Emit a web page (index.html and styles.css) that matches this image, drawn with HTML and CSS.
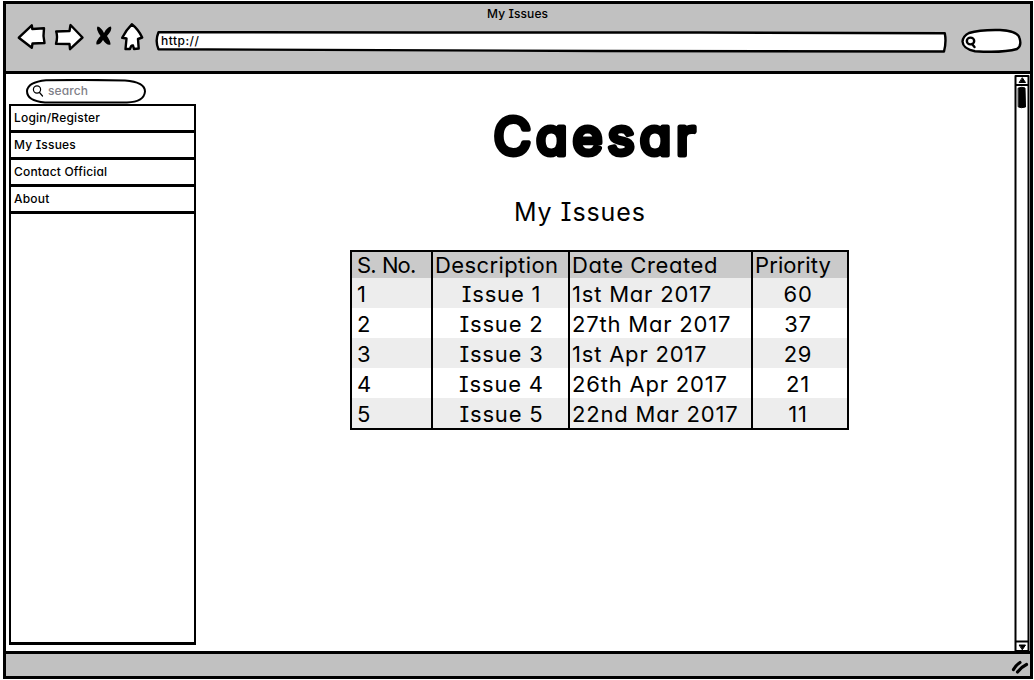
FILE: index.html
```html
<!DOCTYPE html>
<html lang="en">
<head>
<meta charset="utf-8">
<title>My Issues</title>
<link rel="stylesheet" href="styles.css">
</head>
<body>
<div class="window">
  <header class="chrome">
    <div class="window-title">My Issues</div>
    <div class="toolbar">
      <svg class="nav-icons" width="132" height="32" viewBox="15 21 132 32">
        <path d="M18.800 37.700L31.800 25.300L32.300 29L44 28.300Q42.800 36 44.500 43L32.500 43.500L31.800 47.800Z"/>
        <path d="M82.500 37.500L70.500 25L69.500 31L56.200 31.500Q58 37 56 43.800L69.500 44L70 49.200Z"/>
        <path class="solid" d="M97.500 26.500Q101 27 104 33Q107 27 111 26.500Q112.500 30 107 36Q110.500 41 110.500 44.500Q107 46 103 40Q100 45 96.500 44.500Q95.500 41 100.500 36Q95.500 29 97.500 26.500Z"/>
        <path d="M131.800 24.300Q126 30 122.200 37.800L126.500 38.500L125.500 49L130 49Q131 45 133 45.500L134 49L138.700 48.500L138 39L142.200 37.500Q138 29 131.800 24.300Z"/>
      </svg>
      <div class="address">
        <svg class="address-shape" width="792" height="23" viewBox="155 30 792 23"><path d="M158.500 32.200L420 32.500L700 32.500L944.800 33.300Q946.500 42 944 51.500L600 51L158.500 49.200Q154.800 41 158.500 32.200Z"/></svg>
        <span class="address-text">http://</span>
      </div>
      <svg class="web-search" width="62" height="26" viewBox="960 28 62 26">
        <path d="M969 33Q980 29.500 1000 30Q1018 31 1019.500 38Q1022 46 1017 49Q1003 53 975 51.200Q963 49 962.500 41.500Q963 36 969 33Z"/>
        <ellipse cx="970.500" cy="41" rx="3.700" ry="3.400"/><path d="M972 44L974.500 47"/>
      </svg>
    </div>
  </header>

  <div class="viewport">
    <aside class="sidebar">
      <div class="search">
        <svg class="search-shape" width="122" height="25" viewBox="25 79 122 25">
          <path d="M46 80.300Q90 79.500 125 80.500Q145 82 145 91.500Q144 102 127 102.500L45 102.500Q27 101 27 91Q28 82 46 80.300Z"/>
          <g class="lens"><circle cx="37" cy="89.500" r="3.600"/><path d="M39.500 92.500L42.500 96"/></g>
        </svg>
        <span class="search-text">search</span>
      </div>
      <nav class="menu">
        <a class="menu-item">Login/Register</a>
        <a class="menu-item">My Issues</a>
        <a class="menu-item">Contact Official</a>
        <a class="menu-item">About</a>
      </nav>
    </aside>

    <main class="content">
      <h1 class="brand"><svg width="220" height="68"><text x="3.500" y="53.500" textLength="202">Caesar</text></svg></h1>
      <h2 class="heading">My Issues</h2>
      <table class="issues">
        <colgroup><col class="c-no"><col class="c-desc"><col class="c-date"><col class="c-prio"></colgroup>
        <thead>
          <tr><th>S. No.</th><th>Description</th><th>Date Created</th><th>Priority</th></tr>
        </thead>
        <tbody>
          <tr><td>1</td><td>Issue 1</td><td>1st Mar 2017</td><td>60</td></tr>
          <tr><td>2</td><td>Issue 2</td><td>27th Mar 2017</td><td>37</td></tr>
          <tr><td>3</td><td>Issue 3</td><td>1st Apr 2017</td><td>29</td></tr>
          <tr><td>4</td><td>Issue 4</td><td>26th Apr 2017</td><td>21</td></tr>
          <tr><td>5</td><td>Issue 5</td><td>22nd Mar 2017</td><td>11</td></tr>
        </tbody>
      </table>
    </main>

    <svg class="scrollbar" width="16" height="577" viewBox="1014 75 16 577">
      <path class="frame" d="M1015.500 76H1028.500V651H1015.500ZM1015.500 85H1028.500M1015.500 641.500H1028.500"/>
      <path class="mark" d="M1022.500 78L1025.500 82.500H1019.500ZM1019.500 645H1025.500L1022.500 649.500Z"/>
      <path class="thumb" d="M1018.500 88Q1022 86.500 1025 88L1025.500 107Q1021 108.500 1018.500 107Z"/>
    </svg>
  </div>

  <footer class="status">
    <svg class="grip" width="18" height="16" viewBox="1011 659 18 16"><path d="M1013.500 669.500Q1016 665 1020 662.500M1017.500 672Q1022 666.500 1026.500 664.500"/></svg>
  </footer>
</div>
</body>
</html>
```
FILE: styles.css
```css
* { box-sizing: border-box; }

body {
  margin: 0;
  width: 1034px;
  height: 680px;
  padding: 1px 1px 1px 3px;
  background: #fff;
  color: #000;
  font-family: Inter, Lato, sans-serif;
  font-weight: 450;
  font-feature-settings: "cv11", "cv08";
  overflow: hidden;
}

svg { display: block; fill: #fff; stroke: #000; stroke-width: 2.4; stroke-linejoin: round; stroke-linecap: round; }

.window { display: flex; flex-direction: column; height: 678px; border: 3px solid #000; background: #fff; }

.chrome { height: 70px; background: #c1c1c1; border-bottom: 3px solid #000; }
.window-title { height: 17px; padding: 2px 0 0 481px; font-size: 12px; line-height: 15px; letter-spacing: 0.1px; }
.toolbar { display: flex; padding-left: 9px; }
.nav-icons { flex: none; }
.nav-icons .solid { fill: #000; stroke: none; }
.address { position: relative; flex: none; margin: 9px 0 0 8px; width: 792px; height: 23px; }
.address-text { position: absolute; left: 6px; top: 3px; font-size: 12px; line-height: 15px; letter-spacing: 0.5px; }
.web-search { flex: none; margin: 7px 0 0 13px; }

.viewport { display: flex; height: 577px; }
.sidebar { width: 189px; padding: 5px 0 0 3px; }
.search { position: relative; height: 25px; margin-left: 16px; }
.search-shape { stroke-width: 2; }
.search-text { position: absolute; left: 23px; top: 4px; color: #808088; font-size: 12px; line-height: 15px; letter-spacing: 0.1px; }
.lens { stroke-width: 1.2; }
.menu { width: 187px; height: 541px; border: 2px solid #000; border-bottom-width: 3px; }
.menu-item { display: block; height: 27px; padding: 4px 0 0 3px; border-bottom: 3px solid #000; font-size: 12px; line-height: 15px; letter-spacing: 0.2px; }

.content { flex: 1; padding-left: 155px; }
.brand { margin: 0; padding: 27px 0 0 140px; height: 95px; }
.brand text { fill: #000; font-size: 51.5px; font-weight: 400; stroke-width: 5; }
.heading { margin: 0; padding: 26px 0 0 164px; height: 81px; font-size: 25px; line-height: 34px; font-weight: 400; letter-spacing: 0.9px; }

.issues { width: 499px; table-layout: fixed; border-collapse: separate; border-spacing: 0; border: 2px solid #000; font-size: 22px; line-height: 26px; letter-spacing: 0.8px; }
.c-no { width: 81px; }
.c-desc { width: 137px; }
.c-date { width: 183px; }
.issues th, .issues td { padding: 1px 0 0 2px; height: 30px; border-right: 2px solid #000; font-weight: 420; text-align: left; white-space: nowrap; }
.issues th { height: 26px; padding-top: 0; background: #cacaca; letter-spacing: 0.4px; }
.issues th:first-child, .issues td:first-child { padding-left: 5px; }
.issues th:last-child, .issues td:last-child { border-right: 0; }
.issues th:first-child { letter-spacing: -0.9px; word-spacing: 1px; }
.issues th:nth-child(3) { letter-spacing: 0.6px; }
.issues th:last-child { letter-spacing: 0.1px; }
.issues td:nth-child(2), .issues td:nth-child(4) { text-align: center; }
.issues td:nth-child(4) { padding: 1px 4px 0 0; }
.issues tbody tr:nth-child(odd) { background: #ededed; }

.scrollbar { flex: none; margin-top: 1px; fill: none; stroke-width: 2; }
.scrollbar .mark, .scrollbar .thumb { fill: #000; stroke-width: 1; }

.status { flex: 1; display: flex; justify-content: flex-end; background: #c1c1c1; border-top: 3px solid #000; }
.grip { margin: 5px 1px 0 0; stroke-width: 3.200; fill: none; }
```
